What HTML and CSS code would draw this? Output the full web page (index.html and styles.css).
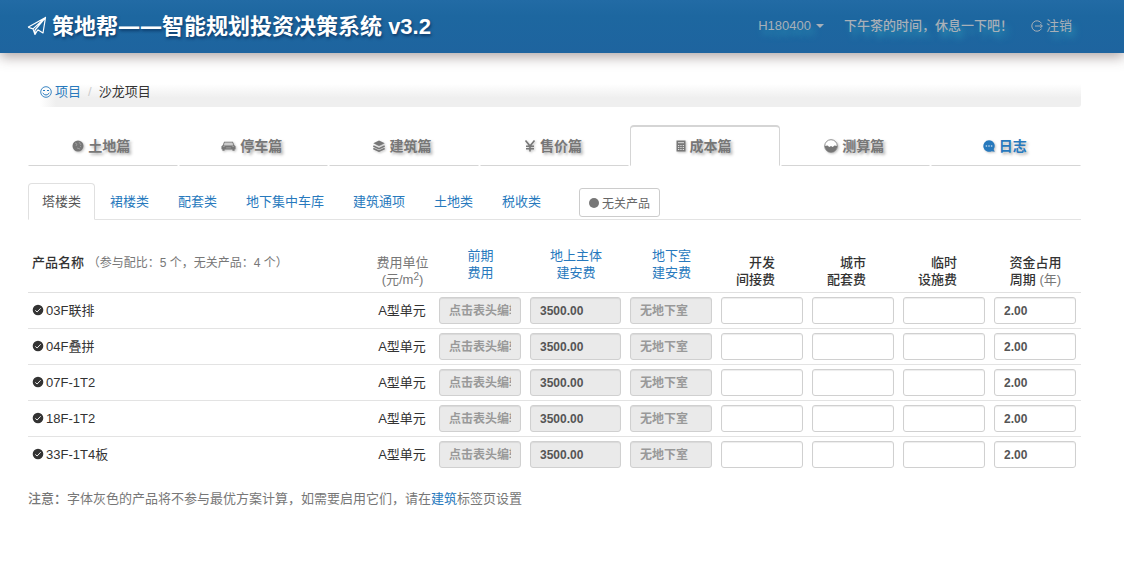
FILE: index.html
```html
<!DOCTYPE html>
<html lang="zh-CN">
<head>
<meta charset="utf-8">
<meta name="viewport" content="width=device-width, initial-scale=1">
<title>策地帮——智能规划投资决策系统 v3.2</title>
<link rel="stylesheet" href="styles.css">
</head>
<body>
<svg class="sprite" aria-hidden="true">
  <symbol id="check" viewBox="0 0 12 12"><circle cx="6" cy="6" r="5.3" fill="#333"/><path d="M3.3 6.4l1.8 1.6 3.6-3.8" fill="none" stroke="#fff" stroke-width=".9"/></symbol>
</svg>
<header class="topbar">
  <h1 class="brand">
    <svg class="brand-icon" viewBox="0 0 20 20" aria-hidden="true"><path d="M1 11.2L18.5 1.5 16 17l-5.2-3.2M1 11.2l5 1.7L18.5 1.5 8 14v4.5l2.8-4.7M6 12.9l2 5.6" fill="none" stroke="currentColor" stroke-width="1.2" stroke-linejoin="round"/></svg>
    <span>策地帮<span class="dash">——</span>智能规划投资决策系统 v3.2</span>
  </h1>
  <nav class="user-nav">
    <button class="user-menu" type="button">H180400 <span class="caret"></span></button>
    <span class="greeting">下午茶的时间，休息一下吧！</span>
    <a class="logout" href="#"><svg class="icon" viewBox="0 0 12 12" aria-hidden="true"><path d="M10.5 3.4A5.2 5.2 0 1 0 10.500 8.600M4 6h7.300M9.300 4l2 2-2 2" fill="none" stroke="currentColor"/></svg>注销</a>
  </nav>
</header>
<main class="page">
  <nav class="breadcrumb" aria-label="路径">
    <a href="#"><svg class="icon" viewBox="0 0 12 12" aria-hidden="true"><circle cx="6" cy="6" r="5.3" fill="none" stroke="currentColor" stroke-width=".9"/><path d="M3 4.500h2M7 4.500h2M2.700 7q3.300 4 6.600 0" fill="none" stroke="currentColor"/></svg>项目</a>
    <span class="slash">/</span>
    <span>沙龙项目</span>
  </nav>
  <nav class="chapters" aria-label="篇章">
    <a href="#"><svg class="icon" viewBox="0 0 12 12" aria-hidden="true"><circle cx="6" cy="6" r="5.500" fill="currentColor"/><path d="M3 3l2 1-1 2M7 2l2 3M5 8l3 1M8 6l1 1" fill="none" stroke="#aaa" stroke-width=".7"/></svg>土地篇</a>
    <a href="#"><svg class="icon car" viewBox="0 0 16 12" aria-hidden="true"><path d="M3.300 1.500h9.400l1.500 3.700 1.300 1v3.300h-1V11h-2.300V9.700H3.800V11H1.500V9.500h-1V6.200l1.300-1z" fill="currentColor"/><path d="M4 2.600h8l.9 2.500H3.100zM2 6.600h2M12 6.600h2M5.500 8h5" fill="#ccc" stroke="#ccc" stroke-width=".5"/></svg>停车篇</a>
    <a href="#"><svg class="icon" viewBox="0 0 12 12" aria-hidden="true"><path d="M6 .5l5.700 2.700L6 5.900.3 3.200z" fill="currentColor"/><path d="M.3 6L6 8.700 11.700 6M.3 8.500L6 11.200l5.700-2.700" fill="none" stroke="currentColor" stroke-width="1.500"/></svg>建筑篇</a>
    <a href="#"><svg class="icon" viewBox="0 0 12 12" aria-hidden="true"><path d="M1.500.5L6 6l4.500-5.500M6 5.500v6M2 6.200h8M2 8.700h8" fill="none" stroke="currentColor" stroke-width="1.600"/></svg>售价篇</a>
    <a href="#" class="active" aria-current="page"><svg class="icon calc" viewBox="0 0 10 12" aria-hidden="true"><path d="M.5.5h9v11h-9z" fill="currentColor"/><path d="M2 2.700h6M2 5.500h1.300M4.300 5.500h1.300M6.700 5.500H8M2 7.500h1.300M4.300 7.500h1.300M6.700 7.500H8M2 9.500h1.300M4.300 9.500h1.300M6.700 9.500H8" stroke="#ddd"/></svg>成本篇</a>
    <a href="#"><svg class="icon gauge" viewBox="0 0 14 14" aria-hidden="true"><circle cx="7" cy="7" r="6.300" fill="#fff" stroke="currentColor" stroke-width=".8"/><path d="M.7 7l2.800-.5L5.300 8 7 7l1.700 1 1.800-1.500 2.800.5a6.300 6.300 0 0 1-12.600 0z" fill="currentColor"/></svg>测算篇</a>
    <a href="#" class="log"><svg class="icon" viewBox="0 0 12 12" aria-hidden="true"><path d="M6 .2a5.800 5.800 0 1 0 2.700 11l3 .6-1-2.600A5.800 5.800 0 0 0 6 .2z" fill="currentColor"/><path d="M2.700 6h1.400M5.300 6h1.400M7.900 6h1.400" stroke="#fff" stroke-width="1.100"/></svg>日志</a>
  </nav>
  <nav class="categories" aria-label="费用类别">
    <a href="#" class="active" aria-current="page">塔楼类</a>
    <a href="#">裙楼类</a>
    <a href="#">配套类</a>
    <a href="#">地下集中车库</a>
    <a href="#">建筑通项</a>
    <a href="#">土地类</a>
    <a href="#">税收类</a>
    <button class="unrelated" type="button"><span class="dot"></span>无关产品</button>
  </nav>
  <table class="costs">
    <colgroup><col><col class="unit"><col class="fee"><col class="fee-wide"><col class="fee"><col class="fee"><col class="fee"><col class="fee"><col class="fee"></colgroup>
    <thead>
      <tr>
        <th class="name">产品名称 <small>（参与配比：5 个，无关产品：4 个）</small></th>
        <th class="muted">费用单位<br>(元/m<sup>2</sup>)</th>
        <th class="linked"><a href="#">前期<br>费用</a></th>
        <th class="linked"><a href="#">地上主体<br>建安费</a></th>
        <th class="linked"><a href="#">地下室<br>建安费</a></th>
        <th class="own">开发<br>间接费</th>
        <th class="own">城市<br>配套费</th>
        <th class="own">临时<br>设施费</th>
        <th class="period">资金占用<br>周期 <span class="muted">(年)</span></th>
      </tr>
    </thead>
    <tbody>
      <tr>
        <td class="name"><svg class="icon"><use href="#check"/></svg>03F联排</td><td>A型单元</td>
        <td><input aria-label="前期费用" placeholder="点击表头编辑" disabled></td>
        <td><input aria-label="地上主体建安费" value="3500.00" disabled></td>
        <td><input aria-label="地下室建安费" placeholder="无地下室" disabled></td>
        <td><input aria-label="开发间接费"></td><td><input aria-label="城市配套费"></td><td><input aria-label="临时设施费"></td>
        <td><input aria-label="资金占用周期" value="2.00"></td>
      </tr>
      <tr>
        <td class="name"><svg class="icon"><use href="#check"/></svg>04F叠拼</td><td>A型单元</td>
        <td><input aria-label="前期费用" placeholder="点击表头编辑" disabled></td>
        <td><input aria-label="地上主体建安费" value="3500.00" disabled></td>
        <td><input aria-label="地下室建安费" placeholder="无地下室" disabled></td>
        <td><input aria-label="开发间接费"></td><td><input aria-label="城市配套费"></td><td><input aria-label="临时设施费"></td>
        <td><input aria-label="资金占用周期" value="2.00"></td>
      </tr>
      <tr>
        <td class="name"><svg class="icon"><use href="#check"/></svg>07F-1T2</td><td>A型单元</td>
        <td><input aria-label="前期费用" placeholder="点击表头编辑" disabled></td>
        <td><input aria-label="地上主体建安费" value="3500.00" disabled></td>
        <td><input aria-label="地下室建安费" placeholder="无地下室" disabled></td>
        <td><input aria-label="开发间接费"></td><td><input aria-label="城市配套费"></td><td><input aria-label="临时设施费"></td>
        <td><input aria-label="资金占用周期" value="2.00"></td>
      </tr>
      <tr>
        <td class="name"><svg class="icon"><use href="#check"/></svg>18F-1T2</td><td>A型单元</td>
        <td><input aria-label="前期费用" placeholder="点击表头编辑" disabled></td>
        <td><input aria-label="地上主体建安费" value="3500.00" disabled></td>
        <td><input aria-label="地下室建安费" placeholder="无地下室" disabled></td>
        <td><input aria-label="开发间接费"></td><td><input aria-label="城市配套费"></td><td><input aria-label="临时设施费"></td>
        <td><input aria-label="资金占用周期" value="2.00"></td>
      </tr>
      <tr>
        <td class="name"><svg class="icon"><use href="#check"/></svg>33F-1T4板</td><td>A型单元</td>
        <td><input aria-label="前期费用" placeholder="点击表头编辑" disabled></td>
        <td><input aria-label="地上主体建安费" value="3500.00" disabled></td>
        <td><input aria-label="地下室建安费" placeholder="无地下室" disabled></td>
        <td><input aria-label="开发间接费"></td><td><input aria-label="城市配套费"></td><td><input aria-label="临时设施费"></td>
        <td><input aria-label="资金占用周期" value="2.00"></td>
      </tr>
    </tbody>
  </table>
  <p class="note"><b>注意：</b>字体灰色的产品将不参与最优方案计算，如需要启用它们，请在<a href="#">建筑</a>标签页设置</p>
</main>
</body>
</html>
```
FILE: styles.css
```css
* { box-sizing: border-box; }

body {
  margin: 0;
  background: #fff;
  color: #333;
  font: 13px/17px "Liberation Sans", "Noto Sans CJK SC", sans-serif;
}

a { color: #2779bd; text-decoration: none; }
button, input { font-family: inherit; }
.sprite { position: absolute; width: 0; height: 0; }
.icon { width: 12px; height: 12px; flex: none; }
.muted { color: #777; }

.topbar {
  display: flex;
  align-items: center;
  justify-content: space-between;
  height: 53px;
  padding: 0 52px 2px 27px;
  background: linear-gradient(#226ba5, #1d67a0 30%, #1e649f);
  box-shadow: 0 4px 12px rgba(80, 60, 60, .45);
}
.brand {
  display: flex;
  align-items: center;
  gap: 5px;
  margin: 0;
  color: #fff;
  font-size: 22px;
  line-height: 32px;
  white-space: nowrap;
  text-shadow: 1px 2px 3px rgba(0, 30, 70, .6);
}
.brand-icon { width: 20px; height: 20px; }
.dash { font-family: "Open Sans", sans-serif; }

.user-nav {
  display: flex;
  align-items: center;
  color: #a8b0b8;
  text-shadow: 4px 6px 6px #2c91b5;
  white-space: nowrap;
}
.user-menu {
  display: flex;
  align-items: center;
  gap: 5px;
  margin-right: 20px;
  padding: 0;
  border: 0;
  background: none;
  color: inherit;
  font-size: 13px;
  text-shadow: inherit;
}
.caret {
  border: 4px solid transparent;
  border-top-color: currentColor;
  border-bottom: 0;
}
.greeting { margin-right: 18px; font-weight: 500; }
.logout { display: flex; align-items: center; gap: 3px; color: inherit; }

.page { padding: 31px 43px 0 28px; }

.breadcrumb {
  display: flex;
  align-items: center;
  height: 23px;
  margin-left: 12px;
  padding-bottom: 8px;
  background: linear-gradient(90deg, #fff, transparent 16px), linear-gradient(#fff, #efefef 60%);
  border-radius: 3px;
}
.breadcrumb a { display: flex; align-items: center; gap: 3px; }
.slash { padding: 0 7px; color: #ccc; }

.chapters { display: flex; gap: 1px; margin-top: 18px; }
.chapters a {
  display: flex;
  flex: 1;
  align-items: center;
  justify-content: center;
  gap: 4px;
  height: 41px;
  padding-right: 3px;
  border: 1px solid transparent;
  border-top-width: 2px;
  border-bottom-color: #d5d5d5;
  color: #777;
  font-size: 14px;
  font-weight: bold;
  text-shadow: 2px 2px 3px rgba(0, 0, 0, .3);
}
.chapters .icon { filter: drop-shadow(1px 1px 1px rgba(0, 0, 0, .25)); }
.chapters .car { width: 15px; }
.chapters .calc { width: 10px; }
.chapters .gauge { width: 14px; height: 14px; }
.chapters .active {
  border-color: #d5d5d5;
  border-bottom-color: #fff;
  border-radius: 4px 4px 0 0;
}
.chapters .log { color: #2779bd; }

.categories {
  display: flex;
  align-items: stretch;
  gap: 1px;
  height: 37px;
  margin-top: 17px;
  border-bottom: 1px solid #e3e3e3;
}
.categories a {
  display: flex;
  align-items: center;
  padding: 0 13px;
  border: 1px solid transparent;
}
.categories .active {
  margin-bottom: -1px;
  border-color: #e0e0e0;
  border-bottom-color: #fff;
  border-radius: 4px 4px 0 0;
  background: #fff;
  color: #555;
}
.unrelated {
  display: flex;
  align-items: center;
  gap: 3px;
  height: 29px;
  margin: 5px 0 0 23px;
  padding: 0 9px;
  border: 1px solid #ccc;
  border-radius: 3px;
  background: #fff;
  color: #666;
  font-size: 12px;
}
.dot { width: 10px; height: 10px; border-radius: 50%; background: #777; }

.costs {
  width: 100%;
  margin-top: 24px;
  border-collapse: separate;
  border-spacing: 0;
  table-layout: fixed;
}
.unit { width: 65px; }
.fee { width: 91px; }
.fee-wide { width: 100px; }
.costs th {
  height: 49px;
  padding: 0 0 4px;
  border-bottom: 1px solid #e0e0e0;
  font-weight: 500;
  text-align: center;
  vertical-align: bottom;
}
.costs th.name { padding: 0 0 20px 4px; text-align: left; }
.costs th.linked { padding-bottom: 11px; font-weight: normal; }
.costs th.own { padding-right: 33px; text-align: right; }
.costs th.muted, .costs .muted { font-weight: normal; }
.costs small { color: #777; font-size: 12px; font-weight: normal; }
.costs sup { font-size: 10px; line-height: 0; vertical-align: 4px; }
.costs td {
  height: 36px;
  padding: 4px 5px 4px 4px;
  border-bottom: 1px solid #e3e3e3;
  text-align: center;
}
.costs tr:last-child td { border-bottom-color: transparent; }
.costs td.name { text-align: left; }
.costs td .icon { margin-right: 2px; vertical-align: -1px; }
.costs input {
  display: block;
  width: 100%;
  height: 27px;
  padding: 0 9px;
  border: 1px solid #d0d0d0;
  border-radius: 3px;
  background: #fff;
  box-shadow: inset 0 1px 1px rgba(0, 0, 0, .075);
  color: #555;
  font-size: 12px;
  font-weight: bold;
}
.costs input:disabled { background: #eaeaea; }
.costs input::placeholder { color: #999; }

.note { margin: 17px 0 0; color: #777; }
.note b { font-weight: 500; }
```
